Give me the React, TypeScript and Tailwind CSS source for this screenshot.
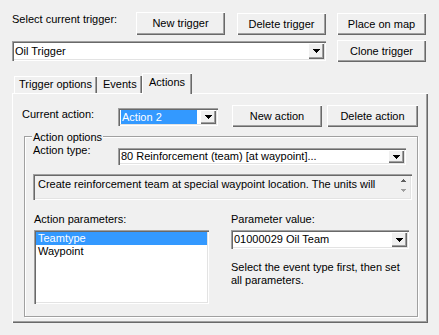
import type { ReactNode } from 'react';

// Classic Win32 trigger editor — "Actions" tab.

const raised =
  'bg-[#f0f0f0] shadow-[inset_1px_1px_0_#ffffff,inset_-1px_-1px_0_#696969,inset_-2px_-2px_0_#a0a0a0]';
const sunken =
  'shadow-[inset_1px_1px_0_#a0a0a0,inset_2px_2px_0_#696969,inset_-1px_-1px_0_#ffffff,inset_-2px_-2px_0_#e3e3e3]';

function Button({ className, children }: { className: string; children: ReactNode }) {
  return <div className={`${raised} flex shrink-0 items-center justify-center ${className}`}>{children}</div>;
}

function DownTri({ color = '#000' }: { color?: string }) {
  return (
    <svg width="7" height="4" viewBox="0 0 7 4" shapeRendering="crispEdges">
      <path d="M0 0h7v1h-1v1h-1v1h-1v1h-1v-1h-1v-1h-1v-1h-1z" fill={color} />
    </svg>
  );
}

function Combo({ className, children }: { className: string; children: ReactNode }) {
  return (
    <div className={`flex shrink-0 items-center bg-white py-[2px] pr-[2px] pl-[3px] ${sunken} ${className}`}>
      <div className="flex h-full min-w-0 flex-1 items-center overflow-hidden whitespace-nowrap">{children}</div>
      <div className={`${raised} flex h-full w-[16px] shrink-0 items-center justify-center`}>
        <DownTri />
      </div>
    </div>
  );
}

export default function App() {
  return (
    <div className="h-[335px] w-[439px] overflow-hidden bg-[#f0f0f0] pt-[12px] pl-[12px] font-['Liberation_Sans',Arial,sans-serif] text-[11px] leading-[13px] text-black">
      {/* Trigger selection */}
      <div className="flex h-[23px]">
        <span className="mt-[1px] w-[124px]">Select current trigger:</span>
        <Button className="h-[23px] w-[89px]">New trigger</Button>
        <Button className="mt-[1px] ml-[12px] h-[22px] w-[89px]">Delete trigger</Button>
        <Button className="mt-[1px] ml-[11px] h-[22px] w-[89px]">Place on map</Button>
      </div>
      <div className="mt-[5px] flex h-[22px] items-center">
        <Combo className="h-[20px] w-[314px]">Oil Trigger</Combo>
        <Button className="ml-[11px] h-[22px] w-[89px]">Clone trigger</Button>
      </div>

      {/* Tabs */}
      <div className="mt-[11px] ml-[2px] flex h-[20px] items-end">
        <div className="h-[17px] w-[83px] pt-[2px] pl-[5px] shadow-[inset_1px_1px_0_#ffffff,inset_-1px_0_0_#696969,inset_-2px_0_0_#a0a0a0]">
          Trigger options
        </div>
        <div className="h-[17px] w-[45px] pt-[2px] pl-[6px] shadow-[inset_-1px_0_0_#696969,inset_-2px_0_0_#a0a0a0,inset_0_1px_0_#ffffff]">
          Events
        </div>
        <div className="relative z-10 -mb-px h-[21px] w-[50px] bg-[#f0f0f0] pt-[3px] pl-[7px] shadow-[inset_1px_1px_0_#ffffff,inset_-1px_0_0_#696969,inset_-2px_0_0_#a0a0a0]">
          Actions
        </div>
      </div>

      <div className={`h-[230px] w-[416px] pt-[12px] ${raised}`}>
        <div className="flex h-[22px] pl-[10px]">
          <span className="mt-[3px] w-[96px]">Current action:</span>
          <Combo className="mt-[3px] h-[18px] w-[100px]">
            <span className="mr-[3px] flex h-full flex-1 items-center bg-[#3399ff] pl-[1px] text-white">Action 2</span>
          </Combo>
          <Button className="ml-[14px] h-[22px] w-[90px]">New action</Button>
          <Button className="ml-[5px] h-[22px] w-[91px]">Delete action</Button>
        </div>

        {/* Action options group */}
        <div className="relative mt-[9px] ml-[12px] h-[181px] w-[394px] border border-[#a0a0a0] shadow-[inset_1px_1px_0_#ffffff,1px_1px_0_#ffffff]">
          <span className="absolute -top-[6px] left-[7px] bg-[#f0f0f0] px-[1px]">Action options</span>

          <div className="flex h-[22px] pt-[7px] pl-[8px]">
            <span className="w-[85px]">Action type:</span>
            <Combo className="mt-[4px] h-[17px] w-[288px]">80 Reinforcement (team) [at waypoint]...</Combo>
          </div>

          <div className={`mt-[15px] ml-[8px] flex h-[26px] w-[379px] bg-[#f0f0f0] ${sunken}`}>
            <div className="flex-1 overflow-hidden whitespace-nowrap pt-[4px] pl-[5px]">
              Create reinforcement team at special waypoint location. The units will
            </div>
            <div className="flex w-[18px] flex-col items-center pt-[5px]">
              <svg width="5" height="3" viewBox="0 0 5 3" shapeRendering="crispEdges">
                <path d="M2 0h1v1h1v1h1v1h-5v-1h1v-1h1z" fill="#606060" />
              </svg>
              <svg className="mt-[7px]" width="5" height="3" viewBox="0 0 5 3" shapeRendering="crispEdges">
                <path d="M0 0h5v1h-1v1h-1v1h-1v-1h-1v-1h-1z" fill="#a0a0a0" />
              </svg>
            </div>
          </div>

          <div className="mt-[13px] flex">
            <div className="ml-[9px] w-[175px]">
              <div>Action parameters:</div>
              <div className={`mt-[4px] h-[74px] bg-white p-[2px] ${sunken}`}>
                <div className="bg-[#3399ff] pl-[2px] text-white">Teamtype</div>
                <div className="pl-[2px]">Waypoint</div>
              </div>
            </div>
            <div className="ml-[22px] w-[178px]">
              <div>Parameter value:</div>
              <Combo className="mt-[4px] h-[19px] w-[178px]">01000029 Oil Team</Combo>
              <p className="mt-[12px]">
                Select the event type first, then set
                <br />
                all parameters.
              </p>
            </div>
          </div>
        </div>
      </div>
    </div>
  );
}
